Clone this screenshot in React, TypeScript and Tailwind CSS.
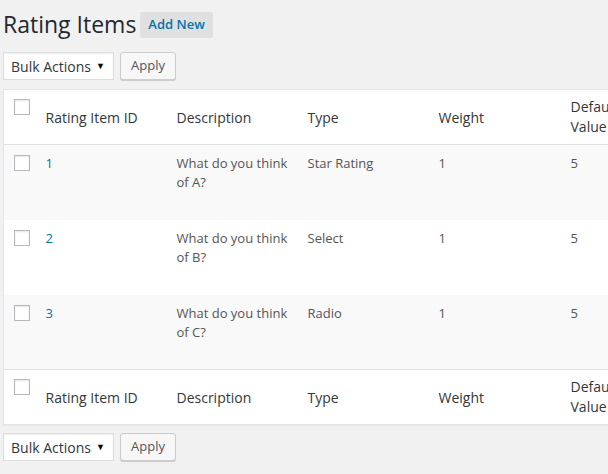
import React from 'react';

const rows = [
  { id: '1', desc: 'What do you think of A?', type: 'Star Rating', weight: '1', def: '5' },
  { id: '2', desc: 'What do you think of B?', type: 'Select', weight: '1', def: '5' },
  { id: '3', desc: 'What do you think of C?', type: 'Radio', weight: '1', def: '5' },
];

const Checkbox: React.FC = () => (
  <span className="block w-4 h-4 bg-white border border-[#b4b9be] shadow-[inset_0_1px_2px_rgba(0,0,0,0.1)]" />
);

const BulkBar: React.FC = () => (
  <div className="flex items-center gap-[6px]">
    <div className="w-[111px] h-[28px] bg-white border border-[#ddd] shadow-[inset_0_1px_2px_rgba(0,0,0,0.07)] flex items-center justify-between pl-[7px] pr-[8px] text-[14px] text-[#32373c]">
      <span>Bulk Actions</span>
      <span className="text-[9px] text-black">▼</span>
    </div>
    <button className="w-[56px] h-[28px] bg-[#f7f7f7] border border-[#ccc] rounded-[3px] shadow-[0_1px_0_#ccc] text-[13px] text-[#555]">
      Apply
    </button>
  </div>
);

const HeadRow: React.FC<{ top?: boolean }> = ({ top }) => (
  <tr className={top ? 'border-b border-[#e1e1e1]' : 'border-t border-[#e1e1e1]'}>
    <td className="align-top pl-[10px] pt-[9px] h-[55px]">
      <Checkbox />
    </td>
    {['Rating Item ID', 'Description', 'Type', 'Weight'].map(h => (
      <th key={h} className="text-left font-normal align-middle pl-[10px] text-[14px] text-[#32373c]">
        {h}
      </th>
    ))}
    <th className="text-left font-normal align-middle pl-[11px] text-[14px] text-[#32373c] leading-[20px]">
      Default Value
    </th>
    <th />
  </tr>
);

const App: React.FC = () => {
  return (
    <div className="w-[608px] h-[474px] overflow-hidden bg-[#f1f1f1] pl-[3px]" style={{ fontFamily: '"Open Sans", sans-serif' }}>
      <div className="flex items-center gap-[4px] pt-[4px] h-[45px]">
        <h1 className="text-[23px] text-[#23282d] font-normal leading-[29px]">Rating Items</h1>
        <span className="h-[26px] px-[8px] flex items-center bg-[#e0e0e0] text-[#0073aa] text-[13px] font-semibold rounded-[2px]">
          Add New
        </span>
      </div>
      <div className="mt-[7px]">
        <BulkBar />
      </div>
      <div className="mt-[9px] w-[700px]">
        <table className="table-fixed w-[700px] border-collapse bg-white border border-[#e5e5e5] shadow-[0_1px_1px_rgba(0,0,0,0.04)]">
          <colgroup>
            <col className="w-[32px]" />
            <col className="w-[131px]" />
            <col className="w-[131px]" />
            <col className="w-[131px]" />
            <col className="w-[131px]" />
            <col className="w-[80px]" />
            <col />
          </colgroup>
          <thead>
            <HeadRow top />
          </thead>
          <tbody>
            {rows.map((r, i) => (
              <tr key={r.id} className={i % 2 === 0 ? 'bg-[#f9f9f9]' : 'bg-white'}>
                <td className="align-top pl-[10px] pt-[10px] h-[75px]">
                  <Checkbox />
                </td>
                <td className="align-top pl-[10px] pt-[9px] text-[13px] leading-[19px] text-[#0073aa]">{r.id}</td>
                <td className="align-top pl-[10px] pr-[10px] pt-[9px] text-[13px] leading-[19px] text-[#555]">{r.desc}</td>
                <td className="align-top pl-[10px] pt-[9px] text-[13px] leading-[19px] text-[#555]">{r.type}</td>
                <td className="align-top pl-[10px] pt-[9px] text-[13px] leading-[19px] text-[#555]">{r.weight}</td>
                <td className="align-top pl-[11px] pt-[9px] text-[13px] leading-[19px] text-[#555]">{r.def}</td>
                <td />
              </tr>
            ))}
          </tbody>
          <tfoot>
            <HeadRow />
          </tfoot>
        </table>
      </div>
      <div className="mt-[8px]">
        <BulkBar />
      </div>
    </div>
  );
};

export default App;
